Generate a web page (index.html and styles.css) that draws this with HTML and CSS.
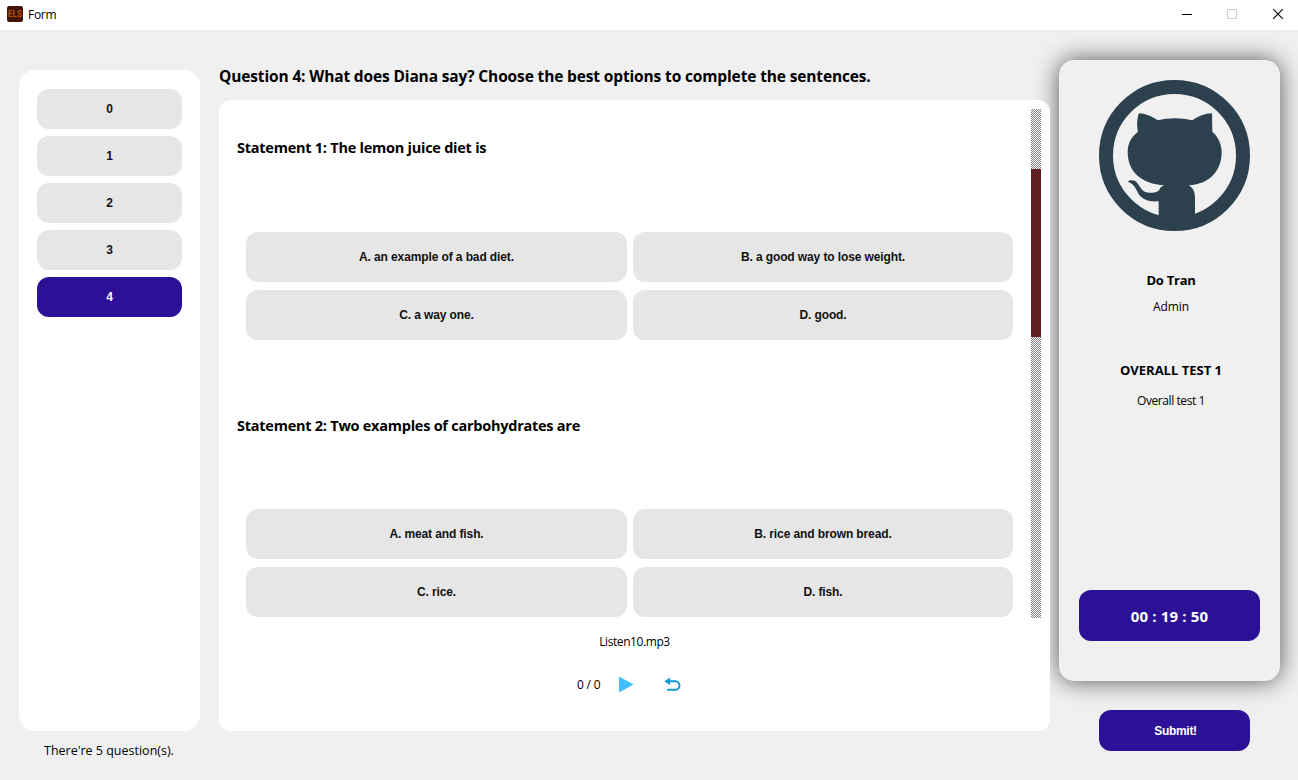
FILE: index.html
```html
<!DOCTYPE html>
<html lang="en">
<head>
<meta charset="utf-8">
<title>Form</title>
<link rel="stylesheet" href="styles.css">
</head>
<body>
<header class="titlebar">
  <svg class="app-icon" width="16" height="16" viewBox="0 0 16 16"><rect width="16" height="16" rx="2" fill="#431407"/><text class="app-icon-text" x="8" y="11" text-anchor="middle" textLength="14" lengthAdjust="spacingAndGlyphs">ELS</text></svg>
  <span class="window-title">Form</span>
  <svg class="window-controls" width="102" height="12" viewBox="0 0 102 12" fill="none">
    <path d="M0 6.5h10" stroke="#000"/>
    <rect x="45.5" y="1.5" width="9" height="9" stroke="#ccc"/>
    <path d="M91.2 1.2l9.6 9.6M100.8 1.2l-9.6 9.6" stroke="#000" stroke-width="1.1"/>
  </svg>
</header>
<main class="layout">
  <aside class="sidebar">
    <nav class="question-list">
      <button class="question">0</button>
      <button class="question">1</button>
      <button class="question">2</button>
      <button class="question">3</button>
      <button class="question active">4</button>
    </nav>
    <p class="question-count">There're 5 question(s).</p>
  </aside>
  <section class="content">
    <h1 class="question-title">Question 4: What does Diana say? Choose the best options to complete the sentences.</h1>
    <div class="panel">
      <div class="scroll-area">
        <div class="statements">
          <article class="statement">
            <h2 class="statement-title">Statement 1: The lemon juice diet is</h2>
            <div class="options">
              <button class="option">A. an example of a bad diet.</button>
              <button class="option">B. a good way to lose weight.</button>
              <button class="option">C. a way one.</button>
              <button class="option">D. good.</button>
            </div>
          </article>
          <article class="statement">
            <h2 class="statement-title">Statement 2: Two examples of carbohydrates are</h2>
            <div class="options">
              <button class="option">A. meat and fish.</button>
              <button class="option">B. rice and brown bread.</button>
              <button class="option">C. rice.</button>
              <button class="option">D. fish.</button>
            </div>
          </article>
        </div>
        <div class="scrollbar"><div class="thumb"></div></div>
      </div>
      <div class="player">
        <p class="track">Listen10.mp3</p>
        <div class="controls">
          <span class="time">0 / 0</span>
          <svg class="play" width="15" height="17" viewBox="0 0 15 17"><path d="M0 .4 14.6 8.4 0 16.4z" fill="#40bfff"/></svg>
          <svg class="replay" width="17" height="15" viewBox="0 0 17 15" fill="none"><path d="M4 4.2h7.2a4.2 4.2 0 0 1 0 8.6H3.2" stroke="#1296db" stroke-width="1.9"/><path d="M.4 4.2 6 .4V8z" fill="#1296db"/></svg>
        </div>
      </div>
    </div>
  </section>
  <aside class="profile-column">
    <div class="profile">
      <svg class="avatar" width="151" height="151" viewBox="42 29 453 453">
        <circle cx="268.5" cy="255.5" r="205.5" fill="none" stroke="#2c414d" stroke-width="42"/>
        <path fill="#2c414d" d="M162 129C180 129 200 138 218 150C250 142 290 142 322 150C340 138 360 129 381 129L382 184C400 200 410 222 410 245C410 300 375 341 312 345C325 354 330 365 330 385V445H221V393C185 396 165 385 155 360C148 345 142 340 129 334C133 328 150 328 156 337C168 352 172 367 195 367C215 367 220 362 223 358C226 352 230 348 238 345C170 341 127 305 128 243C129 215 140 200 159 184C154 165 157 140 162 129Z"/>
      </svg>
      <p class="user-name">Do Tran</p>
      <p class="user-role">Admin</p>
      <p class="test-name">OVERALL TEST 1</p>
      <p class="test-description">Overall test 1</p>
      <div class="timer">00 : 19 : 50</div>
    </div>
    <button class="submit">Submit!</button>
  </aside>
</main>
</body>
</html>
```
FILE: styles.css
```css
* { box-sizing: border-box; margin: 0; padding: 0; }
body {
  width: 1298px;
  height: 780px;
  overflow: hidden;
  background: #f0f0f0;
  color: #000;
  font: 12px/20px "Open Sans", "Noto Sans", sans-serif;
}
p, h1, h2, .time, .window-title { white-space: nowrap; }
button {
  border: 0;
  background: #e6e6e6;
  color: #111;
  font: bold 12px/16px "Liberation Sans", Arial, sans-serif;
  letter-spacing: -.11px;
}
.titlebar {
  display: flex;
  align-items: center;
  height: 30px;
  padding: 0 14px 0 7px;
  background: #fff;
}
.app-icon { margin-top: -2px; }
.app-icon-text { fill: #b45309; font: bold 8.5px Roboto, sans-serif; }
.window-title { margin-left: 5px; letter-spacing: -.3px; }
.window-controls { margin: -2px 0 0 auto; }
.layout {
  display: grid;
  grid-template-columns: 181px 831px 221px;
  column-gap: 19px;
  height: 750px;
  padding-left: 19px;
}
.sidebar { padding-top: 40px; }
.question-list {
  display: flex;
  flex-direction: column;
  gap: 7px;
  height: 661px;
  padding: 19px 18px;
  border-radius: 16px;
  background: #fff;
}
.question { height: 40px; border-radius: 12px; }
.active { background: #2c1096; color: #fff; }
.question-count { margin-top: 10px; padding-left: 25px; font-size: 12.5px; }
.content { z-index: 1; padding-top: 34px; }
.question-title { height: 36px; font-size: 15.5px; line-height: 25px; letter-spacing: -.14px; }
.panel {
  height: 631px;
  padding-top: 9px;
  border-radius: 12px;
  background: #fff;
}
.scroll-area { display: flex; justify-content: space-between; height: 509px; padding-right: 9px; overflow: hidden; }
.statements { width: 794px; padding: 27px 0 0 18px; }
.statement { height: 278px; }
.statement + .statement { height: 232px; }
.statement-title { height: 96px; font-size: 14.5px; line-height: 24px; letter-spacing: -.25px; }
.statement + .statement .statement-title { height: 95px; }
.options {
  display: grid;
  grid-template-columns: 381px 380px;
  gap: 8px 6px;
  padding-left: 9px;
}
.option { height: 50px; border-radius: 12px; }
.scrollbar {
  width: 10px;
  padding-top: 60px;
  background: repeating-conic-gradient(#808080 0 25%, #fff 0 50%) 0 0 / 2px 2px;
}
.thumb { height: 168px; background: #5f1f20; }
.track { padding-top: 14px; text-align: center; letter-spacing: -.42px; }
.controls { display: flex; align-items: center; height: 20px; margin-top: 23px; padding-left: 358px; }
.time { width: 24px; letter-spacing: -.2px; }
.play { margin: -2px 0 0 18px; }
.replay { margin: -2px 0 0 30px; }
.profile-column { width: 221px; margin-left: -10px; }
.profile {
  display: flex;
  flex-direction: column;
  align-items: center;
  height: 621px;
  margin-top: 30px;
  padding-top: 20px;
  border-radius: 15px;
  background: #f0f0f0;
  box-shadow: 0 0 25px rgba(0, 0, 0, .65);
}
.profile p { margin-left: 3px; }
.profile .avatar { margin-left: 10px; }
.profile .user-name { margin-top: 39px; font-size: 13px; font-weight: bold; letter-spacing: -.25px; }
.profile .user-role { margin-top: 7px; letter-spacing: -.1px; }
.profile .test-name { margin-top: 43px; font-size: 13px; font-weight: bold; }
.profile .test-description { margin-top: 11px; letter-spacing: -.42px; }
.timer {
  width: 181px;
  height: 51px;
  margin-top: 179px;
  border-radius: 12px;
  background: #2c1096;
  color: #fff;
  font-size: 15px;
  font-weight: bold;
  line-height: 53px;
  letter-spacing: .17px;
  text-align: center;
}
.submit {
  display: block;
  width: 151px;
  height: 41px;
  margin: 29px 0 0 40px;
  padding-left: 2px;
  border-radius: 12px;
  background: #2c1096;
  color: #fff;
  letter-spacing: -.3px;
}
```
